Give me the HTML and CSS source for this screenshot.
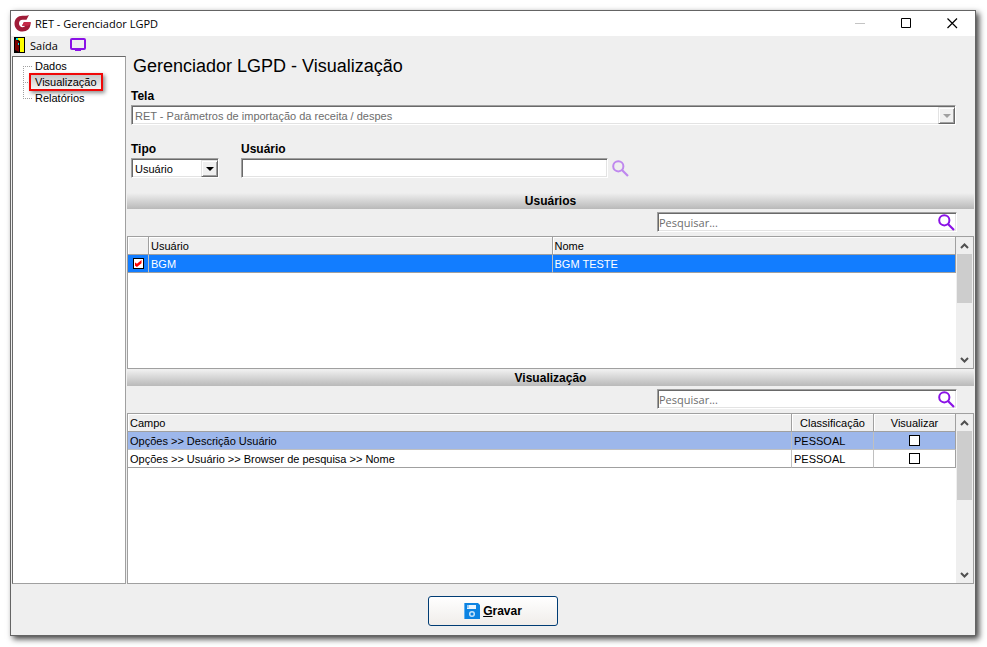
FILE: index.html
```html
<!DOCTYPE html>
<html lang="pt-BR">
<head>
    <meta charset="UTF-8">
    <meta name="viewport" content="width=device-width, initial-scale=1.0">
    <title>RET - Gerenciador LGPD</title>
    <link rel="stylesheet" href="styles.css">
</head>
<body>
    <svg class="symbols">
        <symbol id="lupa" viewBox="0 0 17 17">
            <circle cx="6.3" cy="6.3" r="5.1" fill="none" stroke="currentColor" stroke-width="2"/>
            <path d="M10 10l6 6" stroke="currentColor" stroke-width="2.2"/>
        </symbol>
        <symbol id="seta-cima" viewBox="0 0 9 6">
            <path d="M1 5l3.5-3.5L8 5" fill="none" stroke="currentColor" stroke-width="2"/>
        </symbol>
        <symbol id="seta-baixo" viewBox="0 0 9 6">
            <path d="M1 1l3.5 3.5L8 1" fill="none" stroke="currentColor" stroke-width="2"/>
        </symbol>
    </svg>
    <div class="window">
        <header class="titlebar">
            <svg class="logo" width="17" height="17" viewBox="0 0 17 17">
                <path d="M15 0L12.500 4.800H8.500C6.300 4.800 5 6.500 5 8.500s1.500 3.700 3.500 3.700c1.400 0 2.300-.5 2.700-1.400H8L10 7h6.500v2c0 4.500-3.300 7.500-8 7.500C3.700 16.500.5 13 .5 8.700.5 4 3.800.8 8.500.8 11 .8 13.500.8 15 0z" fill="#a01c38"/>
                <path d="M10 7h6.500v2l-2.500 1.800H8z" fill="#c62a48"/>
            </svg>
            <span class="title">RET - Gerenciador LGPD</span>
            <button class="win-btn" aria-label="Minimizar" disabled>
                <svg width="11" height="11" viewBox="0 0 11 11"><path d="M0 5.500h10" stroke="#c4c4c4"/></svg>
            </button>
            <button class="win-btn" aria-label="Maximizar">
                <svg width="11" height="11" viewBox="0 0 11 11"><path d="M.5.5h9v9h-9z" fill="none" stroke="#000"/></svg>
            </button>
            <button class="win-btn" aria-label="Fechar">
                <svg width="11" height="11" viewBox="0 0 11 11"><path d="M.5.5l9.500 9.500M10 .5L.5 10" stroke="#000" stroke-width="1.200"/></svg>
            </button>
        </header>
        <div class="toolbar">
            <button class="tool">
                <svg width="11" height="16" viewBox="0 0 11 16">
                    <path d="M0 0h11v16H0z" fill="#000"/>
                    <path d="M1 2l4 3v10l-4-2z" fill="#7d0000"/>
                    <path d="M3 1h7v14H6V4L3 2z" fill="#ffff00"/>
                    <path d="M2 1h2v2H2zM4 6h1v2H4z" fill="#00e5e5"/>
                    <path d="M5 4h1v11H5z" fill="#000"/>
                </svg>
                Saída
            </button>
            <button class="tool" aria-label="Tela">
                <svg width="16" height="14" viewBox="0 0 16 14">
                    <rect x="1" y="1" width="14" height="10" rx="1" fill="none" stroke="#8a12e6" stroke-width="2"/>
                    <path d="M5 11h6v2H5z" fill="#8a12e6"/>
                </svg>
            </button>
        </div>
        <div class="content">
            <nav class="sidebar">
                <ul class="tree">
                    <li><a href="#dados">Dados</a></li>
                    <li><a class="active" href="#visualizacao">Visualização</a></li>
                    <li><a href="#relatorios">Relatórios</a></li>
                </ul>
            </nav>
            <main class="main">
                <div class="form">
                    <h1>Gerenciador LGPD - Visualização</h1>
                    <div class="field">
                        <label for="tela">Tela</label>
                        <div class="select disabled">
                            <select id="tela" disabled>
                                <option>RET - Parâmetros de importação da receita / despes</option>
                            </select>
                            <span class="arrow"></span>
                        </div>
                    </div>
                    <div class="row">
                        <div class="field">
                            <label for="tipo">Tipo</label>
                            <div class="select select-small">
                                <select id="tipo">
                                    <option>Usuário</option>
                                </select>
                                <span class="arrow"></span>
                            </div>
                        </div>
                        <div class="field field-user">
                            <label for="usuario">Usuário</label>
                            <div class="user-box">
                                <input class="text" type="text" id="usuario">
                                <button class="icon-btn light" aria-label="Buscar usuário"><svg width="17" height="17"><use href="#lupa"/></svg></button>
                            </div>
                        </div>
                    </div>
                </div>

                <h2 class="band">Usuários</h2>
                <div class="search">
                    <div class="search-box">
                        <input type="text" placeholder="Pesquisar..." aria-label="Pesquisar usuários">
                        <button class="icon-btn" aria-label="Pesquisar"><svg width="17" height="17"><use href="#lupa"/></svg></button>
                    </div>
                </div>
                <div class="grid grid-users">
                    <div class="grid-body">
                        <table>
                            <colgroup><col class="col-check"><col><col></colgroup>
                            <thead>
                                <tr><th></th><th>Usuário</th><th>Nome</th></tr>
                            </thead>
                            <tbody>
                                <tr class="selected">
                                    <td class="check"><input type="checkbox" aria-label="BGM" checked></td>
                                    <td>BGM</td>
                                    <td>BGM TESTE</td>
                                </tr>
                            </tbody>
                        </table>
                    </div>
                    <div class="scroll">
                        <button aria-label="Subir"><svg width="9" height="6"><use href="#seta-cima"/></svg></button>
                        <div class="thumb"></div>
                        <button aria-label="Descer"><svg width="9" height="6"><use href="#seta-baixo"/></svg></button>
                    </div>
                </div>

                <h2 class="band">Visualização</h2>
                <div class="search">
                    <div class="search-box">
                        <input type="text" placeholder="Pesquisar..." aria-label="Pesquisar campos">
                        <button class="icon-btn" aria-label="Pesquisar"><svg width="17" height="17"><use href="#lupa"/></svg></button>
                    </div>
                </div>
                <div class="grid grid-fields">
                    <div class="grid-body">
                        <table>
                            <colgroup><col><col class="col-fixed"><col class="col-fixed"></colgroup>
                            <thead>
                                <tr><th>Campo</th><th class="center">Classificação</th><th class="center">Visualizar</th></tr>
                            </thead>
                            <tbody>
                                <tr class="current">
                                    <td>Opções &gt;&gt; Descrição Usuário</td>
                                    <td>PESSOAL</td>
                                    <td class="check"><input type="checkbox" aria-label="Visualizar Descrição Usuário"></td>
                                </tr>
                                <tr>
                                    <td>Opções &gt;&gt; Usuário &gt;&gt; Browser de pesquisa &gt;&gt; Nome</td>
                                    <td>PESSOAL</td>
                                    <td class="check"><input type="checkbox" aria-label="Visualizar Nome"></td>
                                </tr>
                            </tbody>
                        </table>
                    </div>
                    <div class="scroll">
                        <button aria-label="Subir"><svg width="9" height="6"><use href="#seta-cima"/></svg></button>
                        <div class="thumb thumb-big"></div>
                        <button aria-label="Descer"><svg width="9" height="6"><use href="#seta-baixo"/></svg></button>
                    </div>
                </div>
            </main>
        </div>
        <footer class="footer">
            <button class="save">
                <svg width="16" height="16" viewBox="0 0 16 16">
                    <path d="M0 0h14l2 2v14H0z" fill="#0c83e2"/>
                    <path d="M0 0h1v16H0z" fill="#5fb0f0"/>
                    <path d="M3 2h9v4H3z" fill="#e9f4fd"/>
                    <path d="M3 2h2v3H3z" fill="#9dcdf5"/>
                    <circle cx="8" cy="11" r="2.300" fill="#0c83e2" stroke="#c4e2fa" stroke-width="1.500"/>
                </svg>
                <span><u>G</u>ravar</span>
            </button>
        </footer>
    </div>
</body>
</html>
```
FILE: styles.css
```css
* {
    box-sizing: border-box;
}
body {
    margin: 0;
    padding: 10px 11px 11px 10px;
    height: 100vh;
    display: flex;
    background: #fff;
    color: #000;
    font-family: "Liberation Sans", Arial, sans-serif;
    font-size: 11px;
}
button, input, select {
    font: inherit;
    color: inherit;
}
button {
    padding: 0;
    border: none;
    background: none;
}
svg {
    display: block;
    flex: none;
}
.symbols {
    position: absolute;
    width: 0;
    height: 0;
}
.window {
    flex: 1;
    min-width: 0;
    display: flex;
    flex-direction: column;
    background: #efefef;
    border: 1px solid #646464;
    box-shadow: 3px 3px 6px rgba(0, 0, 0, 0.75);
}

/* Barra de título */
.titlebar {
    display: flex;
    align-items: center;
    height: 25px;
    padding-left: 3px;
    background: #fff;
    font-family: "Open Sans", sans-serif;
}
.title {
    flex: 1;
    margin-left: 4px;
}
.win-btn {
    width: 46px;
    height: 24px;
    display: flex;
    align-items: center;
    justify-content: center;
}
.toolbar {
    display: flex;
    gap: 12px;
    height: 20px;
    padding-left: 3px;
    font-family: "Open Sans", sans-serif;
}
.tool {
    display: flex;
    align-items: center;
    gap: 5px;
    height: 18px;
}

/* Árvore lateral */
.content {
    flex: 1;
    min-height: 0;
    display: flex;
    gap: 1px;
    padding: 0 1px;
}
.sidebar {
    width: 114px;
    background: #fff;
    border: 1px solid #a0a0a0;
    border-top-color: #696969;
    border-left-color: #696969;
}
.tree {
    margin: 1px 0 0 10px;
    padding: 0;
    list-style: none;
}
.tree li {
    display: flex;
    align-items: center;
    height: 16px;
    background: repeating-linear-gradient(#a0a0a0 0 1px, #fff 1px 2px) no-repeat 0 0 / 1px 100%;
}
.tree li:first-child {
    background-position: 0 8px;
}
.tree li:last-child {
    background-size: 1px 8px;
}
.tree li::before {
    content: "";
    width: 9px;
    border-top: 1px dotted #a0a0a0;
}
.tree a {
    padding: 0 3px;
    color: #000;
    text-decoration: none;
}
.tree .active {
    margin: 0 -3px;
    padding: 1px 4px;
    border: 2px solid #f00808;
    background: linear-gradient(#c8c8c8, #f4f4f4);
    box-shadow: 2px 2px 4px rgba(0, 0, 0, 0.45);
}

/* Formulário */
.main {
    flex: 1;
    min-width: 0;
    display: flex;
    flex-direction: column;
}
.form {
    height: 137px;
    padding: 0 18px 0 4px;
}
h1 {
    margin: 0 0 12px 2px;
    font-size: 18px;
    font-weight: normal;
    line-height: 21px;
}
.field label {
    display: block;
    font-size: 12px;
    font-weight: bold;
    line-height: 14px;
    margin-bottom: 2px;
}
.row {
    display: flex;
    gap: 22px;
    margin-top: 17px;
}
.select, .text, .search-box {
    height: 20px;
    background: #fff;
    border: 1px solid;
    border-color: #a0a0a0 #fff #fff #a0a0a0;
    box-shadow: inset 1px 1px #696969, inset -1px -1px #e3e3e3;
}
.select {
    position: relative;
}
.select select {
    appearance: none;
    width: 100%;
    height: 100%;
    padding: 1px 20px 0 3px;
    border: none;
    background: none;
    opacity: 1;
}
.select-small {
    width: 88px;
}
.disabled {
    color: #6d6d6d;
}
.arrow {
    position: absolute;
    top: 1px;
    right: 0;
    width: 17px;
    height: 17px;
    display: flex;
    align-items: center;
    justify-content: center;
    background: #f0f0f0;
    border: 1px solid;
    border-color: #e3e3e3 #696969 #696969 #e3e3e3;
    box-shadow: inset 1px 1px #fff, inset -1px -1px #a0a0a0;
    pointer-events: none;
}
.arrow::before {
    content: "";
    border: 4px solid transparent;
    border-top-color: currentColor;
    border-bottom: none;
}
.disabled .arrow::before {
    border-top-color: #a0a0a0;
}
.field-user {
    flex: 1;
    max-width: 388px;
}
.user-box {
    display: flex;
    align-items: center;
    gap: 4px;
}
.text {
    flex: 1;
    min-width: 0;
    padding: 0 4px;
}
.icon-btn {
    color: #8a12e6;
}
.icon-btn.light {
    color: #bf88ee;
}

/* Faixas e pesquisa */
.band {
    flex: none;
    height: 16px;
    margin: 0;
    background: linear-gradient(#efefef, #b9b9b9);
    font-size: 12px;
    line-height: 16px;
    text-align: center;
}
.search {
    flex: none;
    display: flex;
    justify-content: flex-end;
    height: 27px;
    padding: 3px 17px 0 0;
}
.search-box {
    display: flex;
    width: 300px;
    padding-right: 1px;
}
.search-box input {
    flex: 1;
    min-width: 0;
    padding: 0 1px;
    border: none;
    background: none;
    font-family: "Open Sans", sans-serif;
}
.search-box input::placeholder {
    color: #6d6d6d;
    opacity: 1;
}

/* Grades */
.grid {
    display: flex;
    background: #fff;
    border: 1px solid #a0a0a0;
}
.grid-users {
    flex: 133 1 0;
    margin-bottom: 1px;
}
.grid-fields {
    flex: 171 1 0;
}
.grid-body {
    flex: 1;
    min-width: 0;
}
table {
    width: 100%;
    table-layout: fixed;
    border-collapse: separate;
    border-spacing: 0;
}
.col-check {
    width: 21px;
}
.col-fixed {
    width: 82px;
}
th, td {
    height: 18px;
    padding: 0 2px;
    border-right: 1px solid #c0c0c0;
    border-bottom: 1px solid #c0c0c0;
    font-weight: normal;
    line-height: 16px;
    text-align: left;
    white-space: nowrap;
    overflow: hidden;
}
th {
    background: #efefef;
    border-color: #a0a0a0;
    box-shadow: inset 1px 1px #fff;
}
td:last-child {
    border-right-color: #a0a0a0;
}
tbody tr:last-child td {
    border-bottom-color: #a0a0a0;
}
.center {
    text-align: center;
}
.check {
    padding: 0;
}
.selected {
    background: #127dff;
    color: #fff;
}
.current {
    background: #9db7eb;
}
input[type="checkbox"] {
    appearance: none;
    display: block;
    width: 11px;
    height: 11px;
    margin: 0 auto;
    border: 1px solid #000;
    background: #fff;
}
input[type="checkbox"]:checked::before {
    content: "";
    display: block;
    width: 7px;
    height: 7px;
    margin: 1px;
    background: #f00;
    clip-path: polygon(0 30%, 35% 55%, 100% 0, 100% 45%, 35% 100%, 0 75%);
}
.scroll {
    display: flex;
    flex-direction: column;
    width: 17px;
    border: solid #efefef;
    border-width: 0 1px;
    background: #efefef;
    color: #505050;
}
.scroll button {
    display: flex;
    align-items: center;
    justify-content: center;
    height: 17px;
}
.thumb {
    height: 49px;
    margin-bottom: auto;
    background: #cdcdcd;
}
.thumb-big {
    height: 69px;
}

/* Rodapé */
.footer {
    display: flex;
    align-items: center;
    justify-content: center;
    height: 51px;
    padding-top: 2px;
}
.save {
    display: flex;
    align-items: center;
    justify-content: center;
    gap: 3px;
    width: 130px;
    height: 30px;
    border: 1px solid #003c74;
    border-radius: 3px;
    background: linear-gradient(#fff, #f0edea);
    font-size: 12px;
    font-weight: bold;
}
```
